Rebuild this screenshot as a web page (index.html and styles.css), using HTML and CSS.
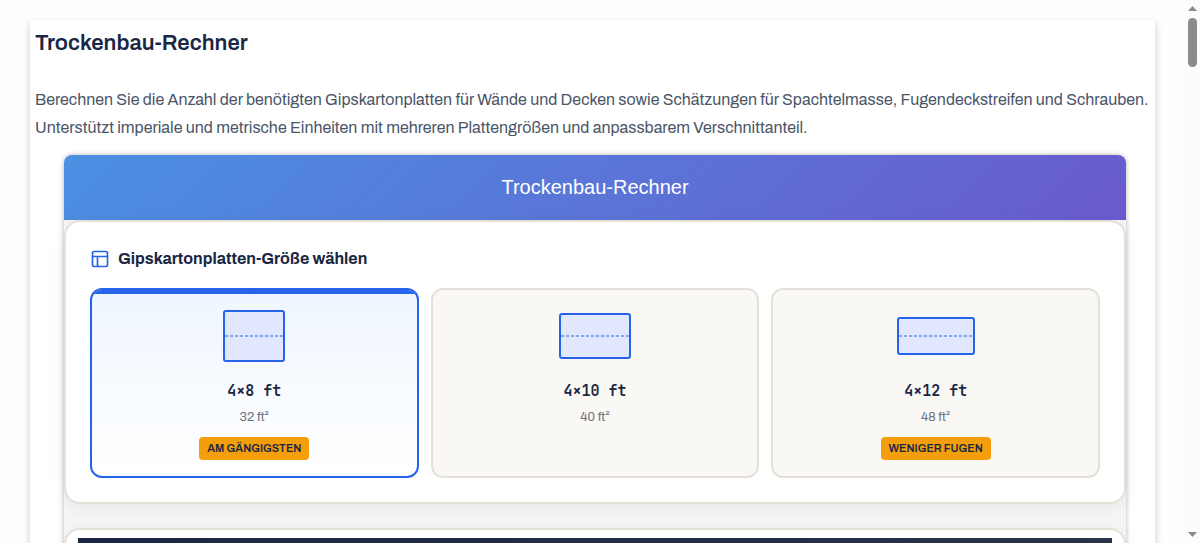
FILE: index.html
```html
<!DOCTYPE html>
<html lang="de">
<head>
    <meta charset="UTF-8">
    <meta name="viewport" content="width=device-width, initial-scale=1.0">
    <title>Trockenbau-Rechner</title>
    <link rel="stylesheet" href="styles.css">
</head>
<body>

    <main class="page">
        <h1>Trockenbau-Rechner</h1>
        <p class="intro">Berechnen Sie die Anzahl der benötigten Gipskartonplatten für Wände und Decken sowie Schätzungen für Spachtelmasse, Fugendeckstreifen und Schrauben. Unterstützt imperiale und metrische Einheiten mit mehreren Plattengrößen und anpassbarem Verschnittanteil.</p>

        <div class="calculator">
            <div class="calculator-header">Trockenbau-Rechner</div>

            <!-- Plattengröße -->
            <section class="card">
                <h2>
                    <svg class="icon" viewBox="0 0 24 24" fill="none" stroke="currentColor" stroke-width="2" aria-hidden="true">
                        <rect x="3" y="3" width="18" height="18" rx="2"/>
                        <path d="M3 9h18M9 21V9"/>
                    </svg>
                    Gipskartonplatten-Größe wählen
                </h2>
                <div class="sizes">
                    <button type="button" class="size active">
                        <span class="visual"><span class="sheet sheet-8"></span></span>
                        <span class="size-name">4×8 ft</span>
                        <span class="size-area">32 ft²</span>
                        <span class="badge">AM GÄNGIGSTEN</span>
                    </button>
                    <button type="button" class="size">
                        <span class="visual"><span class="sheet sheet-10"></span></span>
                        <span class="size-name">4×10 ft</span>
                        <span class="size-area">40 ft²</span>
                    </button>
                    <button type="button" class="size">
                        <span class="visual"><span class="sheet sheet-12"></span></span>
                        <span class="size-name">4×12 ft</span>
                        <span class="size-area">48 ft²</span>
                        <span class="badge">WENIGER FUGEN</span>
                    </button>
                </div>
            </section>

            <!-- Zeichnung -->
            <section class="card card-canvas">
                <div class="canvas"></div>
            </section>
        </div>
    </main>

    <div class="scrollbar" aria-hidden="true">
        <svg class="arrow" viewBox="0 0 9 5"><path d="M0 5L4.500 0L9 5z"/></svg>
        <div class="thumb"></div>
        <svg class="arrow arrow-down" viewBox="0 0 9 5"><path d="M0 0L4.500 5L9 0z"/></svg>
    </div>

</body>
</html>
```
FILE: styles.css
```css
* {
    box-sizing: border-box;
}
body {
    margin: 0;
    padding: 20px 45px 0 30px;
    height: 100vh;
    overflow: hidden;
    background-color: #fefefe;
    color: #1a2744;
    font-family: Archivo, "Liberation Sans", Arial, sans-serif;
    font-size: 16px;
}
.page {
    padding: 5px 5px 40px;
    background-color: #fff;
    box-shadow: 0 4px 8px rgba(0, 0, 0, 0.2);
}
h1 {
    margin: 0 0 25px;
    font-size: 22px;
    font-weight: 600;
    line-height: 36px;
}
.intro {
    margin: 0 0 13px;
    color: #4a5568;
    line-height: 28px;
}
.calculator {
    margin: 0 24px 0 29px;
    border-radius: 8px;
    background-color: #f5f5f5;
    box-shadow: 0 0 5px rgba(0, 0, 0, 0.3);
}
.calculator-header {
    border-radius: 8px 8px 0 0;
    background: linear-gradient(135deg, #4a90e2, #6a5acd);
    color: #fff;
    font-family: "Liberation Sans", Arial, sans-serif;
    font-size: 20px;
    line-height: 65px;
    text-align: center;
}
.card {
    margin-bottom: 24px;
    padding: 24px;
    border: 2px solid #e5e0d8;
    border-radius: 16px;
    background-color: #fff;
    box-shadow: 0 4px 16px rgba(26, 39, 68, 0.06);
}
.card h2 {
    display: flex;
    align-items: center;
    gap: 8px;
    margin: 0 0 16px;
    font-size: 16px;
    font-weight: bold;
    line-height: 26px;
}
.icon {
    width: 20px;
    height: 20px;
    color: #2563eb;
}
.sizes {
    display: grid;
    grid-template-columns: repeat(3, 1fr);
    gap: 12px;
}
.size {
    position: relative;
    display: flex;
    flex-direction: column;
    align-items: center;
    min-height: 190px;
    padding: 16px;
    border: 2px solid #e5e0d8;
    border-radius: 12px;
    background-color: #faf8f5;
    color: #1a2744;
    font-family: inherit;
    overflow: hidden;
    cursor: pointer;
}
.size.active {
    border-color: #2563eb;
    background: linear-gradient(180deg, #eff6ff, #fff);
}
/* blauer Balken oben */
.size.active::before {
    content: "";
    position: absolute;
    top: 0;
    left: 0;
    right: 0;
    height: 4px;
    background-color: #2563eb;
}
.visual {
    display: flex;
    align-items: center;
    height: 60px;
    margin-bottom: 12px;
}
.sheet {
    display: flex;
    align-items: center;
    border: 2px solid #2563eb;
    border-radius: 3px;
    background-color: #e0e7ff;
}
.sheet::after {
    content: "";
    flex: 1;
    height: 2px;
    background: repeating-linear-gradient(90deg, #2563eb 0 3px, transparent 3px 5px);
    opacity: 0.5;
}
.sheet-8 {
    width: 62px;
    height: 52px;
}
.sheet-10 {
    width: 72px;
    height: 46px;
}
.sheet-12 {
    width: 78px;
    height: 38px;
}
.size-name {
    margin-bottom: 4px;
    font-family: "JetBrains Mono", "Liberation Mono", monospace;
    font-size: 15px;
    font-weight: bold;
    line-height: 26px;
}
.size-area {
    margin-bottom: 10px;
    color: #6b7280;
    font-size: 13px;
    line-height: 19px;
}
.badge {
    padding: 3px 8px;
    border-radius: 4px;
    background-color: #f59e0b;
    font-size: 11px;
    font-weight: 600;
    line-height: 17px;
}
.card-canvas {
    padding: 8px 12px;
}
.canvas {
    height: 300px;
    background: linear-gradient(135deg, #1a2744, #2d3748);
}
.scrollbar {
    position: fixed;
    top: 0;
    right: 0;
    bottom: 0;
    display: flex;
    flex-direction: column;
    align-items: center;
    width: 15px;
    padding: 6px 0;
    background-color: #fcfcfc;
}
.arrow {
    width: 9px;
    height: 5px;
    fill: #8b8b8b;
}
.arrow-down {
    margin-top: auto;
}
.thumb {
    width: 9px;
    height: 49px;
    margin-top: 7px;
    border-radius: 5px;
    background-color: #8b8b8b;
}
```
